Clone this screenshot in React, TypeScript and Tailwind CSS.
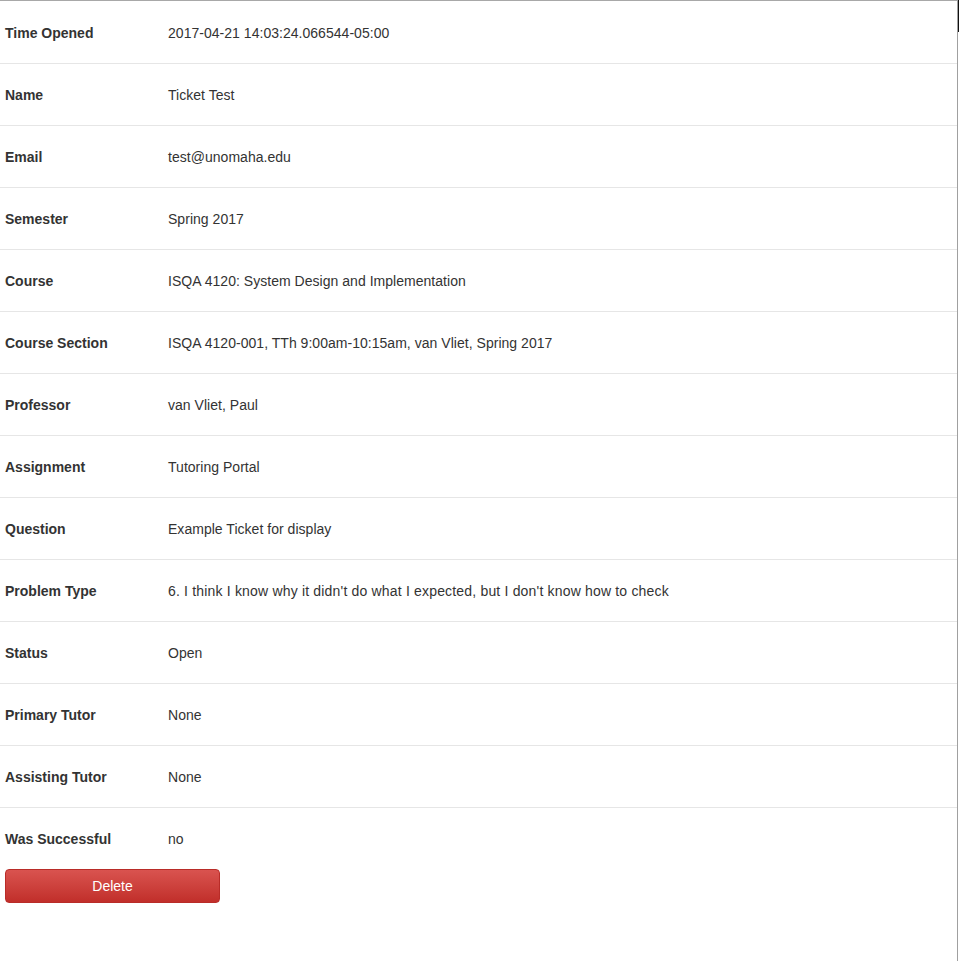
import React from "react";

const rows: [string, string][] = [
  ["Time Opened", "2017-04-21 14:03:24.066544-05:00"],
  ["Name", "Ticket Test"],
  ["Email", "test@unomaha.edu"],
  ["Semester", "Spring 2017"],
  ["Course", "ISQA 4120: System Design and Implementation"],
  ["Course Section", "ISQA 4120-001, TTh 9:00am-10:15am, van Vliet, Spring 2017"],
  ["Professor", "van Vliet, Paul"],
  ["Assignment", "Tutoring Portal"],
  ["Question", "Example Ticket for display"],
  ["Problem Type", "6. I think I know why it didn't do what I expected, but I don't know how to check"],
  ["Status", "Open"],
  ["Primary Tutor", "None"],
  ["Assisting Tutor", "None"],
  ["Was Successful", "no"],
];

export default function App() {
  return (
    <div className="relative w-[959px] h-[961px] bg-white overflow-hidden text-[14px] text-[#333] font-['Liberation_Sans',Arial,sans-serif]">
      <div className="w-[958px] h-[961px] border-t border-r border-t-[#a8a8a8] border-r-[#a0a0a0]">
        <div className="flex flex-col">
          {rows.map(([k, v], i) => (
            <div
              key={k}
              className={
                i === 0
                  ? "flex items-center h-[62px] pt-[2px]"
                  : "flex items-center h-[62px] border-t border-[#e6e6e6]"
              }
            >
              <div className="w-[168px] pl-[5px] font-bold leading-5">{k}</div>
              <div
                className={
                  k === "Problem Type"
                    ? "leading-5 tracking-[0.18px]"
                    : "leading-5 tracking-[0.03px]"
                }
              >
                {v}
              </div>
            </div>
          ))}
        </div>
        <div className="pl-[5px]">
          <button className="w-[215px] h-[34px] rounded-[4px] border border-[#b92c28] bg-gradient-to-b from-[#d9534f] to-[#c12e2a] text-white text-[14px] leading-5">
            Delete
          </button>
        </div>
      </div>
      <div className="absolute right-0 top-0 w-px h-[32px] bg-[#111]" />
    </div>
  );
}
